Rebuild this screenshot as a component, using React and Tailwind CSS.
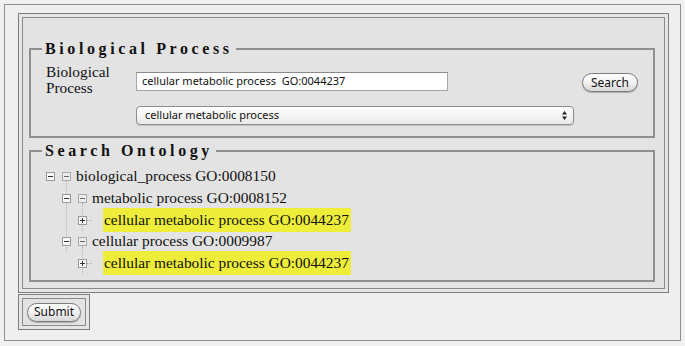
import React from 'react';

const serif = "font-['Liberation_Serif','Times_New_Roman',serif]";
const sans = "font-['Noto_Sans','DejaVu_Sans',sans-serif]";

function ToggleBox({ open }) {
  return (
    <svg width="9" height="9" viewBox="0 0 9 9" className="block">
      <rect x="0.5" y="0.5" width="8" height="8" fill="#f7f7f7" stroke="#9a9a9a" />
      <line x1="2" y1="4.5" x2="7" y2="4.5" stroke="#333" />
      {!open && <line x1="4.5" y1="2" x2="4.5" y2="7" stroke="#333" />}
    </svg>
  );
}

function NodeIcon() {
  return (
    <svg width="9" height="9" viewBox="0 0 9 9" className="block">
      <rect x="0.5" y="0.5" width="8" height="8" fill="#ececec" stroke="#a8a8a8" />
      <line x1="2" y1="4.5" x2="7" y2="4.5" stroke="#666" />
    </svg>
  );
}

function Row({ toggle, open, node, children, highlight }) {
  return (
    <div className={`${serif} flex items-center h-[22px] text-[15.4px] text-[#111]`}>
      {toggle && (
        <span className="w-[16px] flex items-center">
          <ToggleBox open={open} />
          {!open && <span className="w-[5px] border-t border-dotted border-[#aaa]" />}
        </span>
      )}
      {node ? (
        <span className="w-[14px] flex items-center">
          <NodeIcon />
        </span>
      ) : (
        <span className="w-[9px]" />
      )}
      {highlight ? (
        <mark className={`${serif} bg-[#eeee3a] text-[#111] pl-px pr-[2px]`}>{children}</mark>
      ) : (
        <span>{children}</span>
      )}
    </div>
  );
}

export default function App() {
  return (
    <div className="w-[685px] h-[346px] bg-[#f1f1f1] pt-[4px] pl-[4px]">
      <div className="w-[677px] h-[337px] border border-[#8f8f8f] bg-[#efefef] pt-[8px] pl-[13px]">
        {/* main cell */}
        <div className="w-[651px] border border-[#7d7d7d] p-[3px] bg-[#e6e6e6]">
          <div className="border border-[#8a8a8a] bg-[#e3e3e3] pt-[21px] pl-[6px] pr-[9px] pb-[6px]">
            <fieldset className="border-2 border-[#8f8f8f] pl-[15px] pr-[15px] pb-[11px]">
              <legend className={`${serif} -ml-[4px] px-[3px] text-[16px] font-bold tracking-[3.6px] text-[#111] leading-[20px]`}>
                Biological Process
              </legend>
              <div className="flex mt-[3px]">
                <div className={`${serif} w-[90px] text-[15.3px] leading-[16px] text-[#111] pt-[2px]`}>
                  Biological
                  <br />
                  Process
                </div>
                <div className="flex flex-col gap-[15px] pt-[10px]">
                  <div className="w-[312px] h-[19px] bg-white border border-[#a5a5a5] border-t-[#8a8a8a] flex items-center px-[5px]">
                    <span className={`${sans} text-[11px] text-[#111] whitespace-pre`}>cellular metabolic process  GO:0044237</span>
                  </div>
                  <div className="w-[438px] h-[19px] rounded-[4px] border border-[#8e8e8e] bg-gradient-to-b from-white to-[#e9e9e9] flex items-center justify-between pl-[8px] pr-[5px] shadow-[0_1px_1px_rgba(0,0,0,0.15)]">
                    <span className={`${sans} text-[11px] text-[#111]`}>cellular metabolic process</span>
                    <svg width="7" height="11" viewBox="0 0 7 11">
                      <path d="M3.5 1 L6 4.5 L1 4.5 Z" fill="#222" />
                      <path d="M3.5 10 L6 6.5 L1 6.5 Z" fill="#222" />
                    </svg>
                  </div>
                </div>
                <div className="ml-auto pt-[11px]">
                  <button className={`${sans} text-[12px] text-[#111] h-[19px] px-[8px] rounded-full border border-[#7c7c7c] bg-gradient-to-b from-white via-[#f2f2f2] to-[#d6d6d6] shadow-[0_1px_1px_rgba(0,0,0,0.25)] flex items-center`}>
                    Search
                  </button>
                </div>
              </div>
            </fieldset>

            <fieldset className="mt-[3px] border-2 border-[#8f8f8f] pl-[15px] pr-[15px] pb-[6px]">
              <legend className={`${serif} -ml-[4px] px-[3px] text-[16px] font-bold tracking-[3.6px] text-[#111] leading-[20px]`}>
                Search Ontology
              </legend>
              <div className="pt-[4px]">
                <Row toggle open node>biological_process GO:0008150</Row>
                <div className="ml-[20px] -mt-[6px] pt-[6px] border-l border-dotted border-[#b5b5b5]">
                  <div className="-ml-[5px]">
                    <Row toggle open node>metabolic process GO:0008152</Row>
                    <div className="ml-[20px] -mt-[6px] pt-[6px] border-l border-dotted border-[#b5b5b5]">
                      <div className="-ml-[5px]">
                        <Row toggle highlight>cellular metabolic process GO:0044237</Row>
                      </div>
                    </div>
                    <div className="-mt-px">
                      <Row toggle open node>cellular process GO:0009987</Row>
                    </div>
                  </div>
                </div>
                <div className="ml-[36px] -mt-[6px] pt-[6px] border-l border-dotted border-[#b5b5b5]">
                  <div className="-ml-[5px]">
                    <Row toggle highlight>cellular metabolic process GO:0044237</Row>
                  </div>
                </div>
              </div>
            </fieldset>
          </div>
        </div>

        {/* submit cell */}
        <div className="mt-px w-[72px] border border-[#7d7d7d] p-[3px] bg-[#e6e6e6]">
          <div className="border border-[#8a8a8a] bg-[#e3e3e3] h-[28px] flex items-center pl-[4px]">
            <button className={`${sans} text-[12px] text-[#111] h-[19px] px-[6px] rounded-full border border-[#7c7c7c] bg-gradient-to-b from-white via-[#f2f2f2] to-[#d6d6d6] shadow-[0_1px_1px_rgba(0,0,0,0.25)] flex items-center`}>
              Submit
            </button>
          </div>
        </div>
      </div>
    </div>
  );
}
